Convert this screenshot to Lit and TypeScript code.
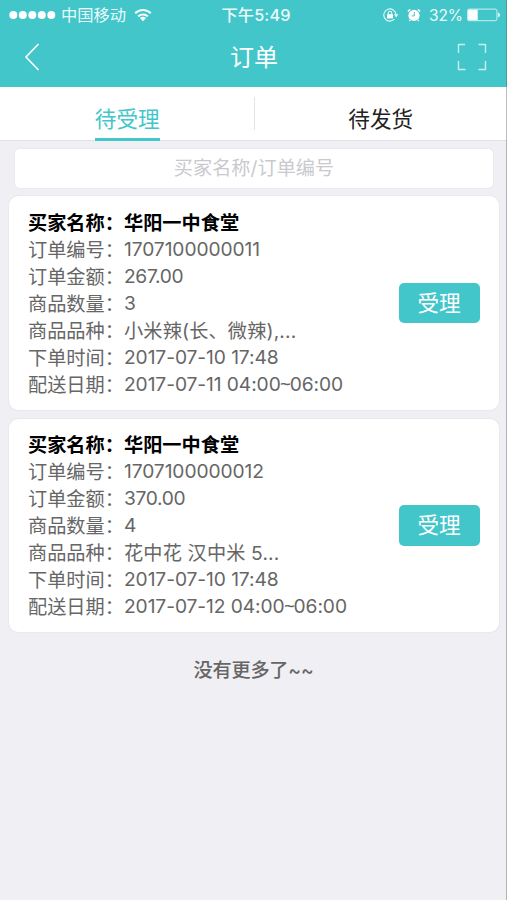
import { LitElement, html, css, svg } from "lit";
import { customElement, property } from "lit/decorators.js";

interface Order {
  buyer: string;
  number: string;
  amount: string;
  count: string;
  goods: string;
  placed: string;
  delivery: [string, string];
}

const orders: Order[] = [
  {
    buyer: "华阳一中食堂",
    number: "1707100000011",
    amount: "267.00",
    count: "3",
    goods: "小米辣(长、微辣),...",
    placed: "2017-07-10 17:48",
    delivery: ["2017-07-11 04:00", "06:00"],
  },
  {
    buyer: "华阳一中食堂",
    number: "1707100000012",
    amount: "370.00",
    count: "4",
    goods: "花中花 汉中米 5...",
    placed: "2017-07-10 17:48",
    delivery: ["2017-07-12 04:00", "06:00"],
  },
];

@customElement("status-bar")
class StatusBar extends LitElement {
  static styles = css`
    :host {
      display: grid;
      grid-template-columns: 1fr auto 1fr;
      align-items: center;
      height: 30px;
      padding: 0 7px 0 9px;
      color: #e9fbfb;
      font-size: 16.3px;
      line-height: 30px;
      white-space: nowrap;
    }
    .left, .right { display: flex; align-items: center; height: 30px; }
    .right { justify-content: flex-end; }
    .carrier { margin: 0 8px 0 5px; }
    .time { padding-left: 3px; font-weight: 500; letter-spacing: 0.1px; height: 30px; }
    .lock { margin-right: 8px; }
    .alarm { margin-right: 8px; }
    .percent { margin-right: 4px; font-size: 15.5px; letter-spacing: -0.1px; height: 30px; line-height: 31px; }
    svg { display: block; flex: none; }
  `;
  render() {
    return html`
      <div class="left">
        <svg width="47" height="30" fill="#fff">
          ${[0, 1, 2, 3, 4].map((i) => svg`<circle cx=${4.3 + i * 9.5} cy="15" r="4"></circle>`)}
        </svg>
        <span class="carrier">中国移动</span>
        <svg width="18" height="14" viewBox="0 0 18 14" fill="none" stroke="#f4fefe" stroke-width="2">
          <path d="M1.2 5.3a11 11 0 0 1 15.6 0M4.1 8.4a7 7 0 0 1 9.8 0"></path>
          <path d="M5.9 10.1a4.4 4.4 0 0 1 6.2 0L9 13.3z" fill="#fff" stroke="none"></path>
        </svg>
      </div>
      <span class="time">下午5:49</span>
      <div class="right">
        <svg class="lock" width="16" height="14" viewBox="0 0 16 14" fill="none" stroke="#e0f8f8" stroke-width="1.1">
          <path d="M11.4 11.2A6.1 6.1 0 1 1 13 6.5"></path>
          <path d="M10.9 6.2h4.6L13.2 9.4z" fill="#e0f8f8" stroke="none"></path>
          <rect x="4" y="6.2" width="6" height="4.2" fill="#fff" stroke="none"></rect>
          <path d="M5.3 6.5V5a1.7 1.7 0 0 1 3.4 0v1.5"></path>
        </svg>
        <svg class="alarm" width="14" height="14" viewBox="0 0 14 14">
          <circle cx="7" cy="7.4" r="5.6" fill="#fff"></circle>
          <path d="M.8 3.4 3.2 1.2M13.2 3.4 10.8 1.2M3.2 12l-.8 1M10.8 12l.8 1" stroke="#fff" stroke-width="1.3"></path>
          <path d="M7.3 4v3.9H4.8" fill="none" stroke="#43c6ca" stroke-width="1"></path>
        </svg>
        <span class="percent">32%</span>
        <svg width="33" height="14" viewBox="0 0 33 14">
          <rect x=".6" y="1.1" width="29.3" height="11.6" rx="1.5" fill="none" stroke="#c9f1f1"></rect>
          <rect x="1.1" y="1.6" width="9.6" height="10.6" fill="#fff"></rect>
          <path d="M31 4.5q2 .8 2 2.4T31 9.3z" fill="#e9fbfb"></path>
        </svg>
      </div>
    `;
  }
}

@customElement("order-card")
class OrderCard extends LitElement {
  @property({ attribute: false }) order!: Order;
  static styles = css`
    :host {
      display: flex;
      align-items: center;
      justify-content: space-between;
      box-sizing: border-box;
      height: 213.5px;
      padding: 0 19px 0 19.5px;
      border-radius: 9px;
      background: #fff;
      box-shadow: 0 0 2px rgba(0, 0, 0, 0.1);
    }
    .details { padding-top: 0.6px; }
    .row { display: flex; height: 27px; line-height: 27px; color: #666; white-space: nowrap; letter-spacing: -0.08px; }
    .label { width: 96px; flex: none; letter-spacing: 0; line-height: 29px; }
    .buyer { color: #000; font-weight: 600; letter-spacing: 0; line-height: 29px; }
    .goods { letter-spacing: 0.15px; line-height: 29px; }
    .amount { letter-spacing: -0.35px; }
    .tilde { font-family: "Noto Sans", sans-serif; letter-spacing: -1.4px; margin-left: -0.6px; line-height: 1; }
    .accept {
      width: 81px;
      height: 40.5px;
      border: 0;
      padding: 0 1px 0 0;
      border-radius: 5px;
      background: #43c6ca;
      color: #fff;
      font: inherit;
      font-size: 21.6px;
      line-height: 38px;
    }
  `;
  render() {
    const o = this.order;
    return html`
      <div class="details">
        <div class="row buyer"><span class="label">买家名称：</span><span>${o.buyer}</span></div>
        <div class="row"><span class="label">订单编号：</span><span>${o.number}</span></div>
        <div class="row"><span class="label">订单金额：</span><span class="amount">${o.amount}</span></div>
        <div class="row"><span class="label">商品数量：</span><span>${o.count}</span></div>
        <div class="row"><span class="label">商品品种：</span><span class="goods">${o.goods}</span></div>
        <div class="row"><span class="label">下单时间：</span><span>${o.placed}</span></div>
        <div class="row"><span class="label">配送日期：</span><span>${o.delivery[0]}<span class="tilde">~</span>${o.delivery[1]}</span></div>
      </div>
      <button class="accept">受理</button>
    `;
  }
}

@customElement("app-root")
class AppRoot extends LitElement {
  static styles = css`
    :host {
      display: block;
      box-sizing: border-box;
      position: relative;
      height: 900px;
      overflow: hidden;
      background: #efeff4;
      font-family: Inter, "Noto Sans CJK SC", sans-serif;
      font-size: 19.2px;
    }
    .edge {
      position: absolute;
      top: 0;
      right: 0;
      width: 1px;
      height: 100%;
      background: rgba(90, 90, 100, 0.4);
    }
    .top { height: 86.5px; background: #43c6ca; }
    .nav {
      display: grid;
      grid-template-columns: 1fr auto 1fr;
      align-items: center;
      height: 54px;
      padding: 0 20px 0 24px;
      color: #fff;
    }
    .title { padding-right: 3px; font-size: 24px; line-height: 56px; height: 54px; }
    .scan { justify-self: end; }
    .tabs { display: flex; align-items: center; height: 53.5px; background: #fff; border-bottom: 1px solid #e2e2e6; }
    .tab { flex: 1; display: flex; justify-content: center; height: 100%; color: #222; font-size: 21.6px; line-height: 65px; }
    .tab span { box-sizing: border-box; height: 54px; }
    .active { padding-left: 1px; }
    .active span { color: #43c6ca; border-bottom: 3.5px solid #43c6ca; }
    .divider { width: 1px; height: 33px; background: #e4e4e6; }
    .search {
      margin: 7.5px 14px 8px 15px;
      height: 39.5px;
      border-radius: 5px;
      background: #fff;
      box-shadow: 0 0 2px rgba(0, 0, 0, 0.08);
      color: #c9c9ce;
      line-height: 39px;
      text-align: center;
    }
    .list { display: flex; flex-direction: column; gap: 9px; padding: 0 8px 0 8.5px; }
    .end { margin-top: 24px; color: #666; text-align: center; line-height: 28px; font-weight: 500; letter-spacing: -0.2px; }
  `;
  render() {
    return html`
      <div class="top">
        <status-bar></status-bar>
        <div class="nav">
          <svg width="17" height="28" viewBox="0 0 17 28" fill="none" stroke="#fff" stroke-width="1.6">
            <path d="M14.5 1 2 14l12.5 13"></path>
          </svg>
          <span class="title">订单</span>
          <svg class="scan" width="30" height="28" viewBox="0 0 30 28" fill="none" stroke="#c4f0f0" stroke-width="1.4">
            <path d="M1.5 10V1.5H8M21.5 1.5h7V10M28.5 18v8.5h-7M8.5 26.5h-7V18"></path>
          </svg>
        </div>
      </div>
      <div class="tabs">
        <div class="tab active"><span>待受理</span></div>
        <div class="divider"></div>
        <div class="tab"><span>待发货</span></div>
      </div>
      <div class="search">买家名称/订单编号</div>
      <div class="list">${orders.map((o) => html`<order-card .order=${o}></order-card>`)}</div>
      <div class="end">没有更多了~~</div>
      <div class="edge"></div>
    `;
  }
}
